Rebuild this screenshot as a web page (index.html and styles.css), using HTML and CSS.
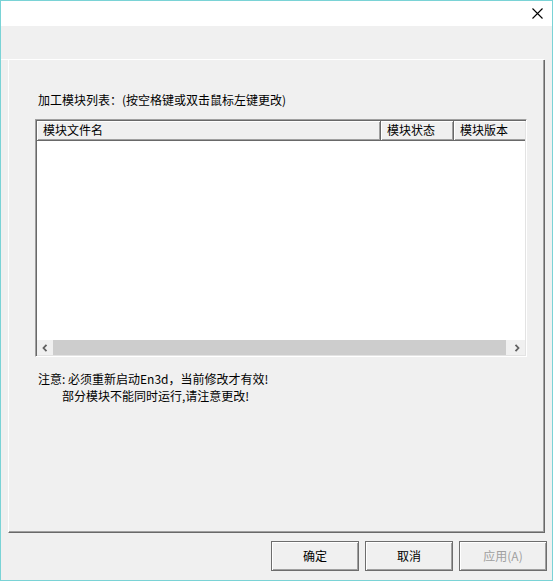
FILE: index.html
```html
<!DOCTYPE html>
<html lang="zh-CN">
<head>
<meta charset="utf-8">
<title>Dialog</title>
<link rel="stylesheet" href="styles.css">
</head>
<body>
<div class="window">
  <div class="titlebar">
    <svg class="close" width="11" height="11" viewBox="0 0 11 11">
      <path d="M0.5 0.5 L10.5 10.5 M10.5 0.5 L0.5 10.5" stroke="#000" stroke-width="1.1" fill="none"/>
    </svg>
  </div>
  <div class="tabline"></div>
  <div class="pane">
    <div class="label">加工模块列表：(按空格键或双击鼠标左键更改)</div>
    <div class="list">
      <div class="header">
        <div class="col col1">模块文件名</div>
        <div class="col col2">模块状态</div>
        <div class="col col3">模块版本</div>
      </div>
      <div class="listbody"></div>
      <div class="hscroll">
        <div class="arrow left">
          <svg width="6" height="8" viewBox="0 0 6 8"><path d="M4.5 0.8 L1.5 4 L4.5 7.2" stroke="#606060" stroke-width="1.8" fill="none"/></svg>
        </div>
        <div class="thumb"></div>
        <div class="arrow right">
          <svg width="6" height="8" viewBox="0 0 6 8"><path d="M1.5 0.8 L4.5 4 L1.5 7.2" stroke="#606060" stroke-width="1.8" fill="none"/></svg>
        </div>
      </div>
    </div>
    <div class="notes">
      <div class="note">注意: 必须重新启动En3d，当前修改才有效!</div>
      <div class="note indent">部分模块不能同时运行,请注意更改!</div>
    </div>
  </div>
  <div class="buttons">
    <div class="btn">确定</div>
    <div class="btn">取消</div>
    <div class="btn disabled">应用(A)</div>
  </div>
</div>
</body>
</html>
```
FILE: styles.css
```css
html, body {
  margin: 0;
  padding: 0;
  background: #f0f0f0;
}
body {
  font-family: "Noto Sans CJK SC", "Noto Sans", sans-serif;
  font-size: 12px;
  color: #000;
}
.window {
  box-sizing: border-box;
  width: 553px;
  height: 581px;
  border: 1px solid #7ad3d6;
  background: #f0f0f0;
  display: flex;
  flex-direction: column;
}
.titlebar {
  height: 25px;
  background: #fff;
  display: flex;
  justify-content: flex-end;
  align-items: flex-start;
  padding-right: 9px;
  padding-top: 7px;
  box-sizing: border-box;
  flex: none;
}
.tabline {
  margin-top: 33px;
  height: 1px;
  width: 543px;
  background: #fff;
  flex: none;
}
.pane {
  box-sizing: border-box;
  margin-left: 7px;
  width: 537px;
  height: 473px;
  border-left: 1px solid #fff;
  border-right: 1px solid #696969;
  border-bottom: 1px solid #696969;
  box-shadow: inset -1px -1px 0 #a0a0a0;
  flex: none;
  display: flex;
  flex-direction: column;
}
.label {
  margin-top: 32px;
  margin-left: 29px;
  line-height: 16px;
  height: 16px;
  white-space: nowrap;
}
.list {
  box-sizing: border-box;
  margin-top: 11px;
  margin-left: 26px;
  width: 492px;
  height: 238px;
  border: 1px solid;
  border-color: #a0a0a0 #fff #fff #a0a0a0;
  box-shadow: inset 1px 1px 0 #696969, inset -1px -1px 0 #e3e3e3;
  padding: 1px;
  background: #fff;
  display: flex;
  flex-direction: column;
  overflow: hidden;
}
.header {
  display: flex;
  height: 20px;
  flex: none;
  overflow: hidden;
}
.col {
  box-sizing: border-box;
  height: 20px;
  line-height: 18px;
  padding-left: 6px;
  background: #f0f0f0;
  border-right: 1px solid #696969;
  border-bottom: 1px solid #696969;
  box-shadow: inset 1px 1px 0 #fff, inset -1px -1px 0 #a0a0a0;
  white-space: nowrap;
  flex: none;
}
.col1 { width: 344px; }
.col2 { width: 73px; }
.col3 { width: 90px; }
.listbody {
  flex: 1;
  background: #fff;
}
.hscroll {
  height: 15px;
  flex: none;
  display: flex;
  background: #f0f0f0;
}
.arrow {
  width: 16px;
  display: flex;
  align-items: center;
  justify-content: center;
  flex: none;
}
.arrow.right {
  width: 17px;
  margin-left: 2px;
}
.thumb {
  flex: 1;
  background: #cdcdcd;
}
.notes {
  margin-top: 13px;
  margin-left: 29px;
}
.note {
  line-height: 17px;
  white-space: nowrap;
}
.note.indent {
  padding-left: 24px;
}
.buttons {
  margin-top: 8px;
  display: flex;
  justify-content: flex-end;
  gap: 6px;
  padding-right: 5px;
  flex: none;
}
.btn {
  box-sizing: border-box;
  width: 88px;
  height: 30px;
  border: 1px solid #6d6d6d;
  box-shadow: inset 1px 1px 0 #fff, inset -1px -1px 0 #a0a0a0;
  background: #f0f0f0;
  display: flex;
  align-items: center;
  justify-content: center;
  line-height: 16px;
}
.btn.disabled {
  color: #a0a0a0;
}
```
